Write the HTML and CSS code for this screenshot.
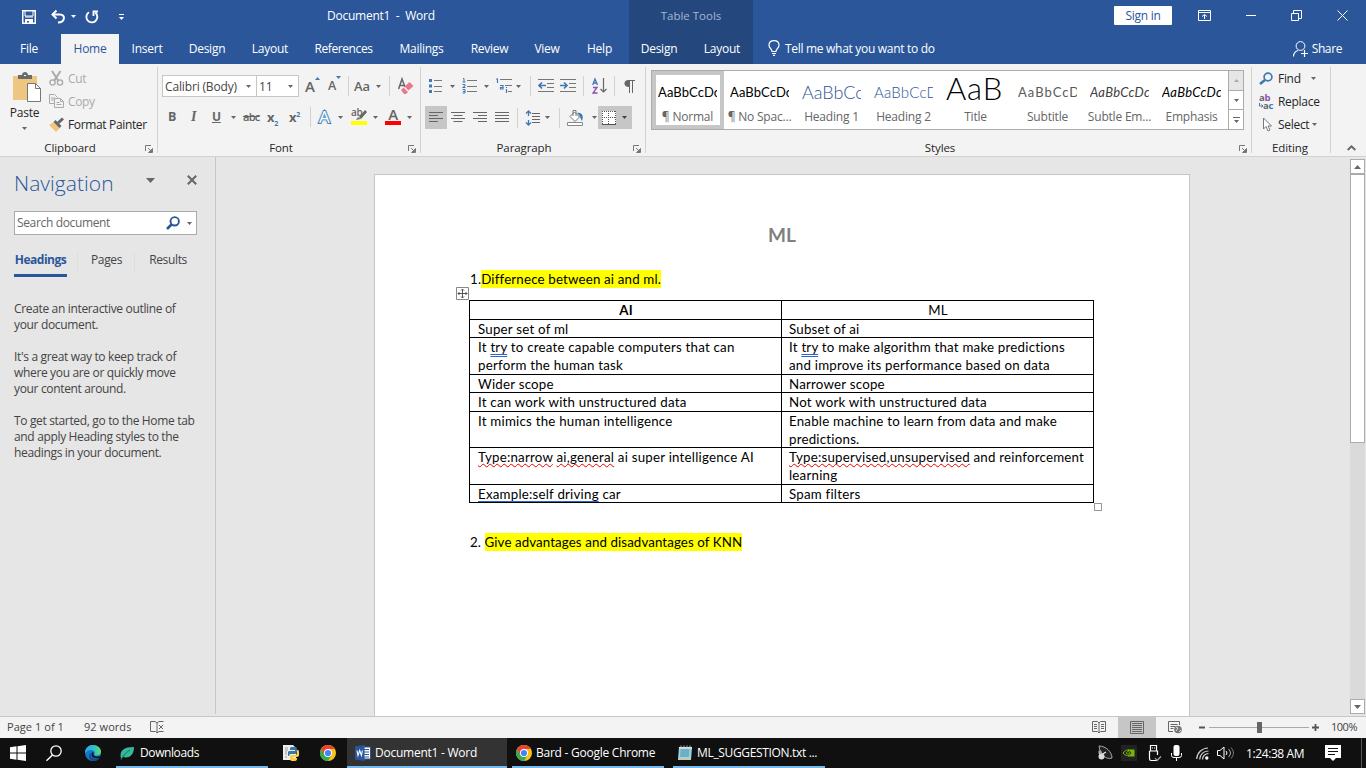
FILE: index.html
```html
<!DOCTYPE html>
<html lang="en">
<head>
<meta charset="utf-8">
<title>Document1 - Word</title>
<link rel="stylesheet" href="styles.css">
</head>
<body>
<svg class="defs" width="0" height="0">
  <symbol id="caret" viewBox="0 0 5 3"><path d="M0 0h5L2.500 3z" fill="currentColor"/></symbol>
  <symbol id="launch" viewBox="0 0 8 8"><path d="M.5 6V.5H6M3 3l3 3M7.500 3.500v4h-4z" fill="none" stroke="#777"/><path d="M7 4v3H4z" fill="#777"/></symbol>
  <symbol id="chrome" viewBox="0 0 16 16"><circle cx="8" cy="8" r="8" fill="#fbc116"/><path d="M1.070 4A8 8 0 0 0 8 16l3.500-6L8 8 4.500 10z" fill="#34a853"/><path d="M1.070 4A8 8 0 0 1 14.930 4H8L4.500 10z" fill="#ea4335"/><circle cx="8" cy="8" r="4" fill="#fff"/><circle cx="8" cy="8" r="3.100" fill="#4285f4"/></symbol>
</svg>
<div class="app">
  <header class="top">
    <div class="titlebar">
      <div class="quick">
        <svg width="14" height="14"><path d="M.75.750h12.500v12.500H.750z" fill="none" stroke="#fff" stroke-width="1.500"/><path d="M3 1v5h8V1M3 7h8" fill="none" stroke="#fff"/><path d="M3 9h8v4H7v-2H5v2H3z" fill="#fff"/></svg>
        <svg width="14" height="14"><path d="M1.500 4.500H9c6 0 5 8-2 8" fill="none" stroke="#fff" stroke-width="2"/><path d="M5.500.500 1.500 4.500l4 4" fill="none" stroke="#fff" stroke-width="2"/></svg>
        <svg width="5" height="3"><use href="#caret"/></svg>
        <svg width="14" height="14"><path d="M4 2.200a5.500 5.500 0 1 0 6.500.600M8.500 6V1.500H13" fill="none" stroke="#fff" stroke-width="1.900"/></svg>
        <svg width="5" height="6"><path d="M0 3h5L2.500 6z" fill="#fff"/><path d="M0 .5h5" stroke="#fff"/></svg>
      </div>
      <div class="doc-title">Document1&nbsp; -&nbsp; Word</div>
      <div class="context-title">Table Tools</div>
      <div class="window">
        <span class="signin">Sign in</span>
        <svg width="13" height="11"><path d="M.5.500h12v10H.500zM1 2.500h11M6.500 9V4.500M4 6.500l2.500-2 2.500 2" fill="none" stroke="#fff"/></svg>
        <svg width="10" height="11"><path d="M0 5.500h10" stroke="#fff"/></svg>
        <svg width="11" height="11"><path d="M.5 3.500h7v7h-7zM2.500 3V.500h8v8H8" fill="none" stroke="#fff"/></svg>
        <svg width="11" height="11"><path d="m.5.500 10 10m0-10-10 10" stroke="#fff"/></svg>
      </div>
    </div>
    <nav class="tabs">
      <a>File</a><a class="on">Home</a><a>Insert</a><a>Design</a><a>Layout</a><a>References</a><a>Mailings</a><a>Review</a><a>View</a><a>Help</a>
      <div class="context"><a>Design</a><a>Layout</a></div>
      <div class="tell"><svg width="12" height="16"><path d="M4 11.500c0-3-3-3-3-6.300C1 2.400 3 .6 6 .6s5 1.800 5 4.600c0 3.300-3 3.300-3 6.300zM4 13.500h4M5 15.400h2" fill="none" stroke="#fff" stroke-width="1.200"/></svg><span>Tell me what you want to do</span></div>
      <div class="share"><svg width="15" height="16"><circle cx="7.500" cy="5" r="4.400" fill="none" stroke="#fff"/><path d="M.5 15.500c0-3 1.500-5 4.500-6M11.500 9v7M8 12.500h7" fill="none" stroke="#fff" stroke-width="1.200"/></svg><span>Share</span></div>
    </nav>
  </header>

  <section class="ribbon">
    <div class="group clipboard">
      <div class="body">
        <div class="paste">
          <svg width="28" height="30"><path d="M0 4h24v24H0z" fill="#eec680"/><path d="M5 3h4c0-4 6-4 6 0h4v4H5z" fill="#6b6b6b"/><path d="M11 3h2v1h-2z" fill="#fff"/><path d="M14.500 11.500h8l5 5v13h-13z" fill="#fff" stroke="#777"/><path d="M22.500 11.500v5h5" fill="none" stroke="#777"/></svg>
          <span>Paste</span>
          <svg width="5" height="3"><use href="#caret"/></svg>
        </div>
        <div class="clip-list">
          <div class="dim"><svg width="15" height="15"><path d="m3 0 6.500 10M11.500 0 5 10" stroke="#aaa" stroke-width="2"/><circle cx="3.500" cy="11.500" r="2.600" fill="none" stroke="#aaa" stroke-width="1.400"/><circle cx="11" cy="11.500" r="2.600" fill="none" stroke="#aaa" stroke-width="1.400"/></svg>Cut</div>
          <div class="dim"><svg width="15" height="15"><path d="M.5.500h5l3 3v6h-8zM2 4h4M2 6h4" fill="#f3f3f3" stroke="#aaa"/><path d="M5.500 4.500h6l3 3v6h-9zM11.500 4.500v3h3M7.500 8.500h3M7.500 10.500h5" fill="#f3f3f3" stroke="#aaa"/></svg>Copy</div>
          <div><svg width="16" height="14"><path d="m0 7 5-3 6 6-4 4z" fill="#eec680"/><path d="m4.500 4 2-2 6 6-2 2z" fill="#666"/><path d="m9 5 5-4.500" stroke="#666" stroke-width="3"/></svg>Format Painter</div>
        </div>
      </div>
      <footer><b>Clipboard</b><svg class="go" width="8" height="8"><use href="#launch"/></svg></footer>
    </div>

    <div class="group font">
      <div class="row font-one">
        <span class="combo">Calibri (Body)<svg width="5" height="3"><use href="#caret"/></svg></span>
        <span class="combo size">11<svg width="5" height="3"><use href="#caret"/></svg></span>
        <span class="glyph grow">A<svg width="5" height="3"><path d="M0 3h5L2.500 0z" fill="#3f78b5"/></svg></span>
        <span class="glyph shrink">A<svg width="5" height="3"><path d="M0 0h5L2.500 3z" fill="#3f78b5"/></svg></span>
        <i class="sep"></i>
        <span class="glyph case">Aa</span>
        <svg width="5" height="3"><use href="#caret"/></svg>
        <i class="sep"></i>
        <svg width="15" height="16"><path d="M.6 11 4 1l3 8M2 7.500h4" fill="none" stroke="#666" stroke-width="1.500"/><path d="m3 12 2.500-2.500L10 14l-2 2H6z" fill="#e8798c"/><path d="m6.500 8.500 5-4.500 4 4-5 4.500z" fill="#e8798c"/></svg>
      </div>
      <div class="row font-two">
        <b>B</b><em>I</em><u>U</u>
        <svg width="5" height="3"><use href="#caret"/></svg>
        <s>abc</s>
        <span class="script">x<sub>2</sub></span>
        <span class="script">x<sup>2</sup></span>
        <i class="sep"></i>
        <span class="effect">A</span>
        <svg width="5" height="3"><use href="#caret"/></svg>
        <span class="marker">ab<svg width="16" height="16"><path d="m8 8 6-7 2 2-6 7z" fill="#666"/><path d="m7 8 3 2-5 1z" fill="#777"/><path d="M0 12h16v4H0z" fill="#ff0"/></svg></span>
        <svg width="5" height="3"><use href="#caret"/></svg>
        <span class="color">A</span>
        <svg width="5" height="3"><use href="#caret"/></svg>
      </div>
      <footer><b>Font</b><svg class="go" width="8" height="8"><use href="#launch"/></svg></footer>
    </div>

    <div class="group paragraph">
      <div class="row para-one">
        <svg width="13" height="16"><path d="M0 1h3v3H0zM0 6.500h3v3H0zM0 12h3v3H0z" fill="#3f78b5"/><path d="M5 2.500h8M5 8.500h8M5 13.500h8" stroke="#777"/></svg>
        <svg width="5" height="3"><use href="#caret"/></svg>
        <svg width="15" height="16"><path d="M1 .5h1V4M.5 4h3M.5 6.500H3V8L.5 9.500h3M.5 11.500H3v3.500H.500M1 13.500h2" fill="none" stroke="#3f78b5"/><path d="M5 2.500h10M5 8.500h10M5 13.500h10" stroke="#777"/></svg>
        <svg width="5" height="3"><use href="#caret"/></svg>
        <svg width="17" height="16"><path d="M0 1h1.500v4M4 7.500h3V11H4.500V9.500H7M10.500 11v4M10.500 9v1" fill="none" stroke="#3f78b5" stroke-width="1.200"/><path d="M4 1.500h12M9 7.500h7M12 13.500h4" stroke="#777"/></svg>
        <svg width="5" height="3"><use href="#caret"/></svg>
        <i class="sep"></i>
        <svg width="16" height="14"><path d="M0 .5h16M9 4.500h7M9 8.500h7M0 12.500h16" stroke="#777"/><path d="M1 6.500h7M4 3.500l-3 3 3 3" fill="none" stroke="#3f78b5" stroke-width="1.700"/></svg>
        <svg width="16" height="14"><path d="M0 .5h16M9 4.500h7M9 8.500h7M0 12.500h16" stroke="#777"/><path d="M0 6.500h7M4 3.500l3 3-3 3" fill="none" stroke="#3f78b5" stroke-width="1.700"/></svg>
        <i class="sep"></i>
        <svg width="15" height="16"><path d="M.7 7 3 1l2.500 6M1.500 5h3" fill="none" stroke="#3f78b5" stroke-width="1.300"/><path d="M1 9.500h4L1 15h4.500" fill="none" stroke="#8b50ad" stroke-width="1.300"/><path d="M11.500 0v14M8.500 11l3 3 3-3" fill="none" stroke="#666" stroke-width="1.200"/></svg>
        <i class="sep"></i>
        <svg width="11" height="13"><path d="M4.500 0H11v1H9v12H8V1H6v12H5V7C-1 7-1 0 4.500 0z" fill="#666"/></svg>
      </div>
      <div class="row para-two">
        <span class="pressed"><svg width="14" height="11"><path d="M0 .5h14M0 3.500h9M0 6.500h14M0 9.500h9" stroke="#666"/></svg></span>
        <svg width="14" height="11"><path d="M0 .5h14M2.500 3.500h9M0 6.500h14M2.500 9.500h9" stroke="#666"/></svg>
        <svg width="14" height="11"><path d="M0 .5h14M5 3.500h9M0 6.500h14M5 9.500h9" stroke="#666"/></svg>
        <svg width="14" height="11"><path d="M0 .5h14M0 3.500h14M0 6.500h14M0 9.500h14" stroke="#666"/></svg>
        <i class="sep"></i>
        <svg width="14" height="16"><path d="M2.500 1v5M2.500 10v5M0 3.500 2.500 1 5 3.500M0 12.500 2.500 15 5 12.500" fill="none" stroke="#3f78b5" stroke-width="1.300"/><path d="M6 3.500h8M6 6.500h8M6 9.500h8M6 12.500h8" stroke="#666"/></svg>
        <svg width="5" height="3"><use href="#caret"/></svg>
        <i class="sep"></i>
        <svg width="17" height="17"><path d="M3 7.500 7.500 3l5 5L8 12.500z" fill="#fff" stroke="#777"/><path d="M6 7V1.500h3V7" fill="none" stroke="#777"/><path d="M10 4c5-1 7 3 5 8-2-3-1-4-5-8z" fill="#3f78b5"/><path d="M.5 13.500h15v3H.500z" fill="#fff" stroke="#888"/></svg>
        <svg width="5" height="3"><use href="#caret"/></svg>
        <span class="pressed borders"><svg width="14" height="14"><path d="M0 0h14v14H0z" fill="#fff"/><path d="M0 .5h14M.5 0v13M13.500 0v13M6.500 0v13M0 6.500h14" stroke="#555" stroke-dasharray="1 1"/><path d="M0 13.500h14" stroke="#555"/></svg><svg width="5" height="3"><use href="#caret"/></svg></span>
      </div>
      <footer><b>Paragraph</b><svg class="go" width="8" height="8"><use href="#launch"/></svg></footer>
    </div>

    <div class="group styles">
      <div class="gallery">
        <div class="style on"><span class="pv">AaBbCcDc</span><span>¶ Normal</span></div>
        <div class="style"><span class="pv">AaBbCcDc</span><span>¶ No Spac...</span></div>
        <div class="style"><span class="pv h1">AaBbCc</span><span>Heading 1</span></div>
        <div class="style"><span class="pv h2">AaBbCcD</span><span>Heading 2</span></div>
        <div class="style"><span class="pv tt">AaB</span><span>Title</span></div>
        <div class="style"><span class="pv st">AaBbCcD</span><span>Subtitle</span></div>
        <div class="style"><span class="pv se">AaBbCcDc</span><span>Subtle Em...</span></div>
        <div class="style"><span class="pv em">AaBbCcDc</span><span>Emphasis</span></div>
        <div class="spin">
          <i class="off"><svg width="5" height="3"><path d="M0 3h5L2.500 0z" fill="#aaa"/></svg></i>
          <i><svg width="5" height="3"><use href="#caret"/></svg></i>
          <i><svg width="7" height="6"><path d="M0 .5h7" stroke="#666"/><path d="M1 3h5L3.500 6z" fill="#666"/></svg></i>
        </div>
      </div>
      <footer><b>Styles</b><svg class="go" width="8" height="8"><use href="#launch"/></svg></footer>
    </div>

    <div class="group editing">
      <div class="edit-list">
        <div><svg width="16" height="14"><circle cx="9" cy="5" r="3.900" fill="none" stroke="#3f78b5" stroke-width="1.700"/><path d="m6 8-5 4" stroke="#3f78b5" stroke-width="2.600"/></svg><span>Find</span><svg class="c1" width="5" height="3"><use href="#caret"/></svg></div>
        <div><span class="rep"><span>a<i>b</i></span><span class="low"><svg width="4" height="5"><path d="M.5 0v3H4M2.500 1.500 4 3 2.500 4.500" fill="none" stroke="#3f78b5"/></svg>a<em>c</em></span></span><span>Replace</span></div>
        <div><svg width="16" height="15"><path d="M4.500 1v11l2.500-2.500 2 4.500 2-1-2-4h3.500z" fill="#fff" stroke="#777"/></svg><span>Select</span><svg class="c2" width="5" height="3"><use href="#caret"/></svg></div>
      </div>
      <footer><b>Editing</b></footer>
    </div>
    <div class="collapse"><svg width="9" height="6"><path d="m.7 5 3.800-3.700L8.300 5" fill="none" stroke="#666" stroke-width="1.900"/></svg></div>
  </section>

  <main class="work">
    <aside class="nav">
      <div class="nav-head"><h2>Navigation</h2><svg width="9" height="5" viewBox="0 0 9 5"><path d="M0 0h9L4.500 5z" fill="#666"/></svg><svg width="10" height="10"><path d="m.8.800 8.400 8.400m0-8.400L.8 9.200" stroke="#666" stroke-width="2"/></svg></div>
      <div class="search"><span>Search document</span><svg width="14" height="14"><circle cx="8.700" cy="5.300" r="4.200" fill="none" stroke="#2b579a" stroke-width="1.900"/><path d="M5.500 8.500 1 13" stroke="#2b579a" stroke-width="2.600"/></svg><svg width="5" height="3"><use href="#caret"/></svg></div>
      <div class="nav-tabs"><b>Headings</b><span>Pages</span><span>Results</span></div>
      <p>Create an interactive outline of<br>your document.</p>
      <p>It's a great way to keep track of<br>where you are or quickly move<br>your content around.</p>
      <p>To get started, go to the Home tab<br>and apply Heading styles to the<br>headings in your document.</p>
    </aside>
    <div class="canvas">
      <article class="page">
        <h1>ML</h1>
        <p class="q">1.<mark>Differnece between ai and ml.</mark></p>
        <div class="table-wrap">
          <svg class="move" width="13" height="13"><path d="M.5.500h12v12H.500z" fill="#fff" stroke="#888"/><path d="M6.500 2v9M2 6.500h9M5 3.500l1.500-1.500L8 3.500M5 9.500 6.500 11 8 9.500M3.500 5 2 6.500 3.500 8M9.500 5 11 6.500 9.500 8" fill="none" stroke="#555"/></svg>
          <div class="tr r19 head"><div><b>AI</b></div><div>ML</div></div>
          <div class="tr r18"><div>Super set of ml</div><div>Subset of ai</div></div>
          <div class="tr r37"><div>It <span class="gram">try</span> to create capable computers that can<br>perform the human task</div><div>It <span class="gram">try</span> to make algorithm that make predictions<br>and improve its performance based on data</div></div>
          <div class="tr r18"><div>Wider scope</div><div>Narrower scope</div></div>
          <div class="tr r19"><div>It can work with unstructured data</div><div>Not work with unstructured data</div></div>
          <div class="tr r36"><div>It mimics the human intelligence</div><div>Enable machine to learn from data and make<br>predictions.</div></div>
          <div class="tr r37"><div><span class="spell">Type:narrow</span> <span class="spell">ai,general</span> ai super intelligence AI</div><div><span class="spell">Type:supervised,unsupervised</span> and reinforcement<br>learning</div></div>
          <div class="tr r18"><div><span class="link">Example:self driving</span> car</div><div>Spam filters</div></div>
          <i class="resize"></i>
        </div>
        <p class="q two">2. <mark>Give advantages and disadvantages of KNN</mark></p>
      </article>
    </div>
    <div class="scroll">
      <i class="btn"><svg width="7" height="4"><path d="M0 4h7L3.500 0z" fill="#666"/></svg></i>
      <i class="thumb"></i>
      <i class="track"></i>
      <i class="btn"><svg width="7" height="4"><path d="M0 0h7L3.500 4z" fill="#666"/></svg></i>
    </div>
  </main>

  <div class="status">
    <span class="pg">Page 1 of 1</span><span class="wc">92 words</span>
    <svg class="proof" width="15" height="13"><path d="M.5.500H5l2 1.500V12l-1.500-1.500h-5zM7 2l2-1.500h4.500M7 12l2-1.500h4.500M9 4l4 4m0-4L9 8" fill="none" stroke="#666"/></svg>
    <div class="views">
      <svg width="14" height="13"><path d="M.5.500h5L7 2l1.500-1.500h5v10h-5L7 12l-1.500-1.500h-5zM7 2v10M2 3.500h3M2 5.500h3M2 7.500h3M9 3.500h3M9 5.500h3M9 7.500h3" fill="none" stroke="#666"/></svg>
      <span><svg width="14" height="13"><path d="M.5.500h13v12H.500zM2 2.500h10M2 4.500h10M2 6.500h10M2 8.500h10M2 10.500h10" fill="none" stroke="#666"/></svg></span>
      <svg width="15" height="14"><path d="M11.500 4V.500H.500v10H5M2.500 3.500h7M2.500 5.500h5M2.500 7.500h3" fill="none" stroke="#666"/><circle cx="10" cy="8.500" r="3.800" fill="#777"/><path d="m8 6 2 1-2 3M11 11l2-2" fill="none" stroke="#ddd"/></svg>
    </div>
    <div class="zoom"><svg width="7" height="9"><path d="M0 4.500h6" stroke="#555" stroke-width="2"/></svg><svg width="100" height="11"><path d="M0 5.500h100" stroke="#aaa"/><path d="M48 0h5v11h-5z" fill="#666"/></svg><svg width="8" height="9"><path d="M0 4.500h7M3.500 1v7" stroke="#555" stroke-width="1.800"/></svg><span>100%</span></div>
  </div>

  <footer class="taskbar">
    <svg class="start" width="16" height="16"><path d="M0 2.300 6.500 1.300v6.200H0zM7.500 1.200 16 0v7.500H7.500zM0 8.500h6.500v6.200L0 13.700zM7.500 8.500H16V16l-8.500-1.200z" fill="#fff"/></svg>
    <svg class="find" width="16" height="16"><circle cx="10" cy="6" r="5.200" fill="none" stroke="#fff" stroke-width="1.300"/><path d="M6.500 10 .5 15.800" stroke="#fff" stroke-width="1.400"/></svg>
    <svg class="edge" width="16" height="16"><defs><linearGradient id="eg" x1="0" y1=".3" x2="1" y2=".3"><stop offset="0" stop-color="#2aa7e8"/><stop offset=".6" stop-color="#35c1c4"/><stop offset="1" stop-color="#62dc65"/></linearGradient></defs><circle cx="8" cy="8" r="8" fill="#1478c8"/><path d="M0 8C0 3.500 3.500 0 8 0s8 3 8 6.500c0 2.500-2 4-4.500 4-2 0-2.500-1-2-2 1.500-3-5-6-9.500-.5z" fill="url(#eg)"/><path d="M6 8c-1 5 4 7 9 5-4 5-11 3-11-1.500C4 9.500 5 8.500 6 8z" fill="#104d93"/><path d="M9 7.500c-2 3 1 5 6.500 3.500l-1 2C10 14 5 12 7 7.500z" fill="#111"/></svg>
    <div class="task dl"><svg width="15" height="14"><path d="M1 13C-1 4 4 1 14 1c0 7-4 12-11 10z" fill="#35b99b"/><path d="M1 14C4 8 7 6 10 4" fill="none" stroke="#176955"/></svg>Downloads</div>
    <svg class="py" width="16" height="16"><path d="M0 0h10l3 3v12H0z" fill="#eee"/><path d="M2 3h3M2 5h3M2 7h2M2 9h2M2 12h2" stroke="#999"/><path d="M8 2h4q2 0 2 2v3q0 2-2 2H8q-2 0-2 2H5V7q0-1 2-1h5V5H7V3z" fill="#3976a8"/><path d="M14 5h1q1 0 1 2v3q0 2-2 2h-4v1h4v1q0 2-3 2H9q-2 0-2-2v-3q0-1 2-1h3q2 0 2-2z" fill="#ffcf3f"/></svg>
    <svg class="ch" width="16" height="16"><use href="#chrome"/></svg>
    <div class="task word"><svg width="16" height="16"><path d="M8 2h7.500v12H8z" fill="#fff" stroke="#2b579a"/><path d="M9 4.500h5M9 7h5M9 9.500h5M9 12h5" stroke="#2b579a"/><path d="M0 1.500 9.500 0v16L0 14.500z" fill="#2b579a"/><path d="m2 5.500 1 5 1.700-5 1.700 5 1-5" fill="none" stroke="#fff" stroke-width="1.100"/></svg>Document1 - Word</div>
    <div class="task bard"><svg width="16" height="16"><use href="#chrome"/></svg>Bard - Google Chrome</div>
    <div class="task note"><svg width="16" height="16"><path d="M2 2h13l-1 13H1z" fill="#9ad7e8"/><path d="M3.500 5h9M3.300 7h9M3.200 9h9M3 11h9" stroke="#3d8ba2"/><path d="M2 2h13v1.500H2z" fill="#eee"/><path d="M4 .500v3M7 .500v3M10 .500v3M13 .500v3" stroke="#bbb"/><path d="M1 13.500h13V15H1z" fill="#d7c58c"/></svg>ML_SUGGESTION.txt ...</div>
    <div class="tray">
      <svg width="16" height="16"><path d="M2 1c7 0 13 6 13 12-6 2-12-3-13-12z" fill="#222" stroke="#aaa"/><path d="m4 10 5-3M2 8l4 4" stroke="#eee" stroke-width="1.200"/><circle cx="4.500" cy="11.500" r="3" fill="#ddd"/><circle cx="3" cy="7" r="1.700" fill="#aaa"/></svg>
      <svg width="16" height="16"><path d="M0 0h16v16H0z" fill="#222"/><path d="M2 8c3-4 7-4 9 0-3 3.500-6 3.500-9 0zM5 8c1.500-2 3-2 4 0-1.500 1.500-3 1.500-4 0z" fill="none" stroke="#76b900"/><path d="M7 4.500h6.500v7H7v-1.200c2 0 3.200-.8 4-2.300-1-1.600-2-2.200-4-2.300z" fill="#76b900"/></svg>
      <svg width="13" height="17"><path d="M2.500 5.500V.500h6v5M1.500 6h8v4M9 15.500H3c-1.500 0-1.500-1-1.500-2V6M4 3h1M6 3h1" fill="none" stroke="#fff" stroke-width="1.200"/><path d="m7 13 2 2.500 4-4" fill="none" stroke="#aaa" stroke-width="1.200"/></svg>
      <svg width="11" height="16"><rect x="2.500" width="6" height="11" rx="2" fill="#fff"/><path d="M.5 8v2.500q0 2 2.500 2h5q2.500 0 2.500-2V8M5.500 12v4" fill="none" stroke="#fff"/></svg>
      <svg width="13" height="13"><path d="M.7 12A11.500 11.500 0 0 1 12 1M3.700 12.500A8.500 8.500 0 0 1 12.500 4M6.500 12.500a6 6 0 0 1 6-6" fill="none" stroke="#ccc" stroke-width="1.200"/><circle cx="10.800" cy="11" r="1.700" fill="#fff"/></svg>
      <svg width="17" height="14"><path d="M.5 4.500H3L7 1v12L3 9.500H.500z" fill="none" stroke="#fff"/><path d="M9 5q2 2 0 4" fill="none" stroke="#fff"/><path d="M11.500 3q4 4 0 8" fill="none" stroke="#aaa"/><path d="M14 1.500q5 5.500 0 11" fill="none" stroke="#777"/></svg>
      <span>1:24:38 AM</span>
      <svg width="16" height="16"><path d="M0 0h16v13h-5l-3 3-3-3H0z" fill="#fff"/><path d="M3 3.500h10M3 6.500h10M3 9.500h7" stroke="#111"/></svg>
      <i></i>
    </div>
  </footer>
</div>
</body>
</html>
```
FILE: styles.css
```css
* { box-sizing: border-box; }
body { margin: 0; overflow: hidden; font: 12px/16px "Open Sans", "Noto Sans", sans-serif; letter-spacing: -.25px; color: #262626; }
svg { display: block; flex: none; overflow: visible; }
.defs { position: absolute; }
i { font-style: normal; }
.app { width: 1366px; height: 768px; display: flex; flex-direction: column; background: #e6e6e6; }
.top { height: 64px; background: #2b579a; color: #fff; }
.titlebar { height: 34px; display: grid; grid-template-columns: 327px 302px 124px 1fr; }
.quick { display: flex; align-items: center; padding: 0 0 1px 22px; }
.quick svg:nth-child(2) { margin-left: 15px; }
.quick svg:nth-child(3) { margin-left: 6px; }
.quick svg:nth-child(4) { margin-left: 9px; }
.quick svg:nth-child(5) { margin-left: 20px; }
.doc-title { padding-top: 8px; white-space: nowrap; }
.context-title { background: #24477d; color: #a4b7d4; text-align: center; padding-top: 8px; letter-spacing: 0; font-size: 11.500px; }
.window { display: flex; padding: 10px 18px 0 0; justify-content: flex-end; }
.signin { width: 58px; height: 19px; margin: -4px 26px 0 0; background: #fff; color: #2b579a; text-align: center; line-height: 19px; border-radius: 1px; }
.window svg + svg { margin-left: 35px; }
.tabs { display: flex; height: 30px; line-height: 29px; }
.tabs a { text-align: center; width: 55px; }
.tabs a:nth-child(1) { width: 61px; padding-right: 3px; }
.tabs a:nth-child(2) { width: 58px; }
.tabs a:nth-child(3) { width: 56px; }
.tabs a:nth-child(4) { width: 64px; }
.tabs a:nth-child(5) { width: 62px; }
.tabs a:nth-child(6) { width: 85px; letter-spacing: -.4px; }
.tabs a:nth-child(7) { width: 71px; }
.tabs a:nth-child(8) { width: 65px; }
.tabs a:nth-child(9) { width: 50px; }
.tabs a.on { background: #f3f3f3; color: #2b579a; }
.context { width: 124px; margin-left: 2px; display: flex; background: #24477d; }
.tabs .context a { width: 62px; padding: 0 2px 0 0; }
.tabs .context a + a { padding: 0; }
.tell, .share { display: flex; align-items: center; white-space: nowrap; }
.tell { padding: 0 0 2px 15px; gap: 5px; letter-spacing: -.3px; }
.share { margin-left: auto; padding: 0 24px 1px 0; gap: 4px; letter-spacing: -.4px; }

.ribbon { height: 93px; display: flex; background: #f3f3f3; border-bottom: 1px solid #d2d2d2; color: #666; }
.group { height: 92px; display: flex; flex-direction: column; border-right: 1px solid #d2d2d2; border-image: linear-gradient(transparent 4px, #d2d2d2 4px, #d2d2d2 88px, transparent 88px) 1; border-width: 0 1px 0 0; }
.group footer { margin-top: auto; height: 16px; display: flex; justify-content: center; color: #262626; position: relative; }
.group footer b { font-weight: 400; font-size: 11.500px; line-height: 16px; letter-spacing: -.1px; }
.go { position: absolute; right: 4px; top: 5px; }
.clipboard { width: 158px; }
.clipboard footer { padding-right: 17px; }
.body { display: flex; }
.paste { width: 49px; padding-top: 8px; display: flex; flex-direction: column; align-items: center; color: #262626; }
.paste svg:first-child { margin-left: 5px; }
.paste span { margin: 3px 0 6px; }
.paste svg { color: #666; }
.clip-list { padding-top: 3px; color: #262626; }
.clip-list > div { height: 23px; display: flex; align-items: center; gap: 4px; white-space: nowrap; letter-spacing: -.35px; }
.clip-list svg { width: 15px; }
.clip-list .dim { color: #aaa; }
.row { display: grid; align-items: center; justify-items: start; height: 22px; }
.sep { width: 1px; height: 20px; background: #d2d2d2; }
.font { width: 263px; }
.font-one { margin: 11px 0 0 4px; grid-template-columns: 94px 49px 23px 20px 6px 22px 13px 9px 20px; }
.combo { width: 95px; height: 22px; border: 1px solid #c6c6c6; background: #fff; display: flex; align-items: center; justify-content: space-between; padding: 1px 5px 0 2px; color: #444; letter-spacing: -.15px; }
.combo svg { color: #666; }
.combo.size { width: 43px; }
.glyph { display: flex; line-height: 20px; font-size: 15px; font-weight: 600; }
.grow svg { margin-top: 1px; } .shrink { font-size: 12.500px; } .case { font-size: 13px; letter-spacing: 0; }
.font-two { margin: 9px 0 0 10px; grid-template-columns: 23px 21px 19px 12px 24px 22px 21px 9px 19px 13px 22px 12px 22px 8px; }
.font-two b { font-size: 12.500px; }
.font-two em { font: italic bold 14px "Liberation Serif", serif; }
.font-two u { font-weight: 700; }
.font-two s { font-size: 11px; font-weight: 600; letter-spacing: -.7px; }
.script { font-size: 13px; font-weight: 700; white-space: nowrap; line-height: 16px; }
.script sub, .script sup { font-size: 7px; color: #3f78b5; line-height: 0; }
.effect { font-size: 17px; color: #fff; line-height: 18px; -webkit-text-stroke: 2.200px #3f78b5; paint-order: stroke fill; text-shadow: 0 0 3px #8ebbe8; }
.marker { position: relative; width: 16px; height: 16px; font-size: 10px; font-weight: 600; line-height: 7px; }
.marker svg { position: absolute; left: 0; top: 0; }
.color { width: 16px; height: 16px; border-bottom: 4px solid #f00; text-align: center; font-size: 15px; font-weight: 600; line-height: 11px; }
.paragraph { width: 225px; }
.para-one { margin: 11px 0 0 8px; grid-template-columns: 21px 12px 22px 12px 20px 14px 8px 22px 23px 9px 22px 10px 11px; }
.para-two { margin: 9px 0 0 4px; height: 23px; grid-template-columns: 26px 22px 22px 22px 9px 19px 14px 8px 25px 6px 34px; }
.pressed { width: 22px; height: 23px; background: #c6c6c6; display: flex; align-items: center; padding: 0 4px; }
.borders { width: 34px; gap: 6px; color: #444; }
.paragraph footer { padding-right: 18px; }
.font footer { padding-right: 16px; }
.styles { width: 606px; }
.gallery { margin: 6px 0 0 5px; width: 593px; height: 60px; border: 1px solid #ababab; background: #fff; display: flex; }
.style { width: 72px; flex: none; height: 58px; padding: 0 8px 0 6px; text-align: center; white-space: nowrap; overflow: hidden; color: #666; letter-spacing: -.2px; }
.style.on { border: 4px solid #c6c6c6; padding: 0 4px 0 2px; }
.style span { display: block; }
.pv { height: 30px; margin: 6px 0 2px; width: 59px; overflow: hidden; font: 13px/30px Lato, sans-serif; letter-spacing: .1px; text-align: left; color: #000; }
.style.on .pv { margin-top: 2px; }
.style > span:last-child { margin: 0 -5px 0 -4px; }
.style .pv.h1 { font-size: 18px; color: #2f5496; font-weight: 300; letter-spacing: 0; }
.style .pv.h2 { font-size: 15px; color: #2f5496; font-weight: 300; letter-spacing: .2px; }
.style .pv.tt { font-size: 31px; font-weight: 300; line-height: 22px; letter-spacing: .8px; }
.pv.st { color: #5a5a5a; letter-spacing: 1px; }
.pv.se { color: #404040; font-style: italic; letter-spacing: .3px; }
.pv.em { font-style: italic; letter-spacing: .3px; }
.spin { width: 15px; margin-left: auto; border-left: 1px solid #ababab; display: flex; flex-direction: column; }
.spin i { flex: 1; display: flex; align-items: center; justify-content: center; }
.spin i + i { border-top: 1px solid #ababab; }
.spin .off { background: #e6e6e6; }
.styles footer { padding-right: 17px; }
.editing { width: 79px; }
.edit-list { padding: 3px 0 0 7px; color: #262626; }
.edit-list > div { height: 23px; display: flex; align-items: center; gap: 3px; letter-spacing: -.3px; }
.edit-list .c1 { margin-left: 7px; color: #666; }
.edit-list .c2 { margin-left: 0; color: #666; }
.edit-list .rep { width: 16px; font: bold 9.500px/8px "Open Sans", sans-serif; color: #666; letter-spacing: -.3px; }
.rep > span { display: flex; align-items: center; }
.rep i { color: #8b50ad; } .rep em { color: #3f78b5; font-style: normal; }
.editing footer { padding-right: 2px; }
.collapse { padding: 81px 0 0 16px; }

.work { height: 560px; display: flex; border-bottom: 1px solid #c6c6c6; }
.nav { width: 216px; height: 557px; border-right: 1px solid #c6c6c6; padding: 11px 18px 0 14px; color: #444; }
.nav-head { display: flex; height: 43px; }
.nav-head h2 { margin: 0; width: 132px; font: 300 21px/30px "Open Sans", sans-serif; color: #2b579a; letter-spacing: .05px; }
.nav-head svg:nth-child(2) { margin-top: 10px; }
.nav-head svg:nth-child(3) { margin: 7px 0 0 32px; }
.search { width: 183px; height: 24px; border: 1px solid #ababab; background: #fff; display: flex; align-items: center; padding: 0 4px 0 2px; color: #666; letter-spacing: -.35px; }
.search svg { margin-left: auto; }
.search svg + svg { margin-left: 7px; }
.nav-tabs { display: flex; height: 41px; margin: 17px 0 8px; }
.nav-tabs b { width: 53px; height: 25px; border-bottom: 3px solid #2b579a; color: #2b579a; letter-spacing: -.5px; text-align: center; }
.nav-tabs span { height: 20px; margin-left: 10px; padding-left: 13px; border-left: 1px solid #dedede; letter-spacing: -.35px; }
.nav-tabs span + span { margin-left: 12px; padding-left: 14px; }
.nav p { margin: 0 0 16px; white-space: nowrap; letter-spacing: -.34px; }
.canvas { width: 1134px; padding: 17px 0 0 158px; overflow: hidden; }
.page { width: 816px; height: 543px; border: 1px solid #c6c6c6; background: #fff; padding: 47px 94px 0; font: 13.300px/18px Lato, sans-serif; letter-spacing: .22px; font-variant-ligatures: none; color: #000; }
.page h1 { margin: 0 0 22px; font: bold 19px/26px Lato, sans-serif; color: #808080; text-align: center; letter-spacing: 0; }
.q { margin: 0; height: 18px; padding-left: 1px; white-space: nowrap; letter-spacing: .17px; }
.q.two { letter-spacing: .1px; }
.q mark { background: #ff0; display: inline-block; height: 18px; }
.table-wrap { position: relative; width: 625px; margin: 12px 0 30px; border: solid #000; border-width: 0 1px 1px 0; }
.tr { display: grid; grid-template-columns: 312px 312px; }
.tr > div { border: solid #000; border-width: 1px 0 0 1px; padding: 0 0 0 8px; white-space: nowrap; }
.tr > div + div { padding-left: 7px; }
.tr.head > div { text-align: center; padding: 0 0 0 1px; }
.r18 { height: 18px; } .r19 { height: 19px; } .r36 { height: 36px; } .r37 { height: 37px; }
.move { position: absolute; left: -13px; top: -13px; }
.resize { position: absolute; right: -9px; bottom: -9px; width: 8px; height: 8px; border: 1px solid #999; background: #fff; }
.gram { text-decoration: underline double #2b66cc 1px; text-underline-offset: 2px; text-decoration-skip-ink: none; }
.spell { text-decoration: underline wavy #e00 1px; text-underline-offset: 1px; text-decoration-skip-ink: none; }
.link { text-decoration: underline #2b66cc 1px; text-underline-offset: 2px; text-decoration-skip-ink: none; }
.scroll { width: 15px; padding: 2px 0; display: flex; flex-direction: column; }
.btn { height: 15px; border: 1px solid #ababab; background: #fff; display: flex; align-items: center; justify-content: center; }
.thumb { height: 269px; border: 1px solid #ababab; background: #fff; }
.track { flex: 1; background: #dadada; }

.status { height: 21px; background: #f3f3f3; display: flex; align-items: center; font-size: 11px; color: #444; letter-spacing: .05px; padding: 0 0 1px 7px; }
.pg { width: 77px; } .wc { width: 66px; }
.wc { margin-top: -1px; }
.views { margin: 0 0 -1px auto; display: flex; align-items: center; }
.views span { width: 38px; height: 21px; margin: 0 12px; padding: 4px 12px; background: #c6c6c6; }
.zoom { display: flex; align-items: center; margin-left: 16px; padding-right: 9px; }
.zoom svg:nth-child(2) { margin: 0 3px; }
.zoom span { margin-left: 11px; letter-spacing: -.5px; }

.taskbar { height: 30px; display: flex; align-items: center; background: #101010; color: #fff; padding-left: 10px; white-space: nowrap; }
.find { margin-left: 20px; } .edge { margin-left: 23px; }
.task { height: 30px; width: 152px; display: flex; align-items: center; gap: 4px; border-bottom: 2px solid #76b9ed; padding: 2px 0 0 4px; }
.dl { margin-left: 15px; gap: 5px; letter-spacing: -.4px; }
.py { margin-left: 15px; } .ch { margin: 0 11px 0 21px; }
.word { width: 160px; padding-left: 8px; background: #333; }
.bard { margin: 0 9px 0 5px; }
.note { letter-spacing: -.34px; }
.tray { margin-left: auto; display: flex; align-items: center; height: 30px; }
.tray svg:nth-child(2) { margin-left: 8px; }
.tray svg:nth-child(3) { margin-left: 11px; }
.tray svg:nth-child(4) { margin-left: 10px; }
.tray svg:nth-child(5) { margin-left: 14px; }
.tray svg:nth-child(6) { margin-left: 8px; }
.tray span { width: 91px; padding: 1px 0 0 12px; letter-spacing: -.4px; }
.tray > i { width: 1px; height: 30px; background: #555; margin: 0 4px 0 20px; }
```
